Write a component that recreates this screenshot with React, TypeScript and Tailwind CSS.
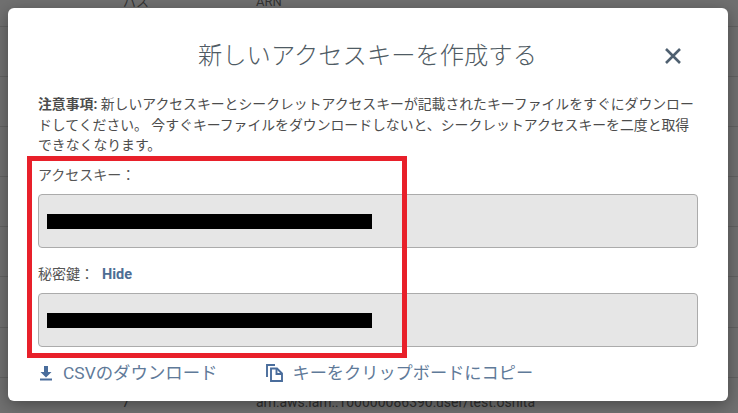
import React from "react";

const font = { fontFamily: '"Roboto", "Noto Sans CJK JP", sans-serif' };

function Field({ gap }: { gap: string }) {
  return (
    <div className={`${gap} flex h-[54px] items-center rounded-[4px] border border-[#ababab] bg-[#e6e6e6] pl-[8px] pt-[2px]`}>
      <div className="h-[15px] w-[325px] bg-black" />
    </div>
  );
}

export default function App() {
  return (
    <div className="relative h-[413px] w-[738px] overflow-hidden bg-[#707070]" style={font}>
      <div className="flex flex-col">
        <div className="h-[27px] border-b border-[#626262] text-[13px] leading-[10px] text-[#333]">
          <div className="flex -translate-y-[3px]">
            <span className="ml-[123px] w-[133px]">パス</span>
            <span>ARN</span>
          </div>
        </div>
        <div className="h-[50px] border-b border-[#626262]" />
        <div className="h-[50px] border-b border-[#626262]" />
        <div className="h-[50px] border-b border-[#626262]" />
        <div className="h-[50px] border-b border-[#626262]" />
        <div className="h-[50px] border-b border-[#626262]" />
        <div className="h-[51px] border-b border-[#626262]" />
        <div className="h-[50px] border-b border-[#626262]" />
        <div className="flex pt-[16px] text-[14px] leading-[16px] text-[#2e2e2e]">
          <span className="ml-[122px] w-[134px]">7</span>
          <span>arn:aws:iam::100000086390:user/test.oshita</span>
        </div>
      </div>

      <div className="absolute left-[8px] top-[8px] flex h-[393px] w-[720px] flex-col rounded-[6px] bg-white px-[30px] shadow-[0_4px_16px_rgba(0,0,0,0.35)]">
        <div className="relative h-[75px] pt-[31px] text-center text-[24.300px] font-light leading-[34px] text-[#4f5b64]">
          <span className="ml-[-1px]">新しいアクセスキーを作成する</span>
          <svg className="absolute right-[15px] top-[38px] h-[20px] w-[20px]" viewBox="0 0 20 20" fill="none" stroke="#4f6070" strokeWidth="2.600">
            <path d="M3 3 L17 17 M17 3 L3 17" />
          </svg>
        </div>
        <p className="mt-[11px] w-[660px] text-[13.850px] leading-[20.500px] text-[#4c4c4c]">
          <b className="font-bold">注意事項:</b> 新しいアクセスキーとシークレットアクセスキーが記載されたキーファイルをすぐにダウンロードしてください。 今すぐキーファイルをダウンロードしないと、シークレットアクセスキーを二度と取得できなくなります。
        </p>
        <div className="mt-[9px] text-[14px] leading-[20px] text-[#555]">アクセスキー：</div>
        <Field gap="mt-[9px]" />
        <div className="mt-[16px] flex text-[14px] leading-[20px] text-[#555]">
          <span>秘密鍵：</span>
          <span className="ml-[8px] mt-[1px] text-[14.500px] font-bold text-[#4d6d94]">Hide</span>
        </div>
        <Field gap="mt-[8px]" />
        <div className="mt-[15px] flex items-center text-[17.400px] leading-[22px] text-[#5f7a99]">
          <svg className="ml-[-1px] h-[18px] w-[18px]" viewBox="0 0 18 18" fill="#4a6d9c">
            <path d="M7 2h4v6h3.500L9 13.500 3.500 8H7z" />
            <rect x="3" y="14.500" width="12" height="2" />
          </svg>
          <span className="ml-[8px]">CSVのダウンロード</span>
          <svg className="ml-[49px] h-[18px] w-[17px]" viewBox="0 0 17 18" fill="none" stroke="#4a6d9c" strokeWidth="1.900">
            <path d="M1 13V1h8" />
            <path d="M5 4.500h6l5 5V17H5z" />
            <path d="M10.500 4.500v5.500h5.500" />
          </svg>
          <span className="ml-[9px] text-[17.200px]">キーをクリップボードにコピー</span>
        </div>
      </div>

      <div className="absolute left-[27px] top-[156px] h-[202px] w-[380px] border-[5px] border-[#e8202a]" />
    </div>
  );
}
